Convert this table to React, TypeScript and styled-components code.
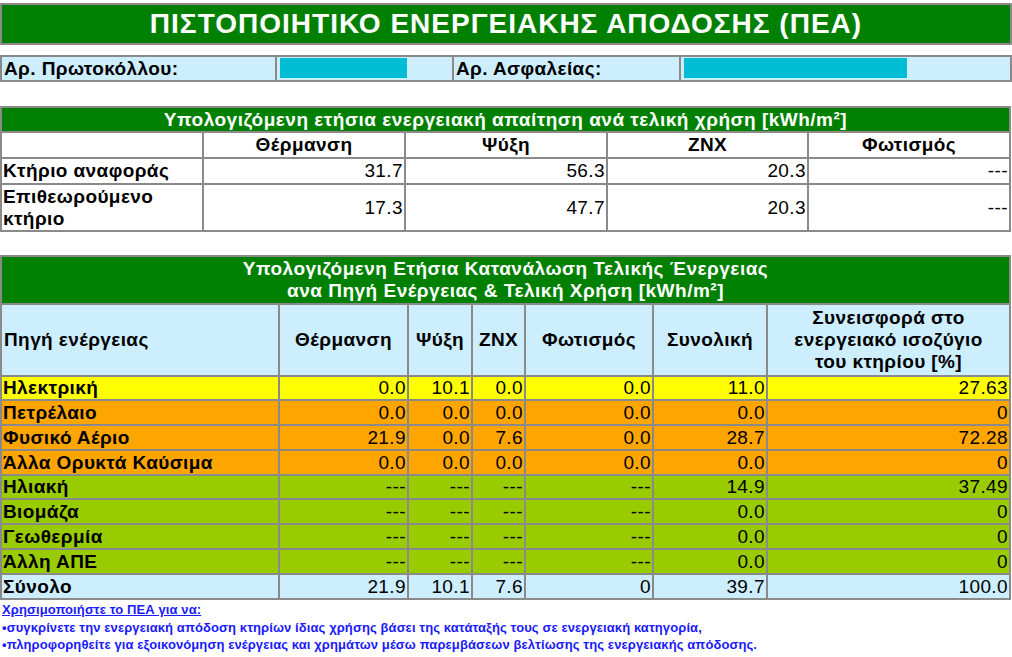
import React from "react";
import styled, { createGlobalStyle } from "styled-components";

const Global = createGlobalStyle`
  html, body { margin: 0; padding: 0; background: #fff; }
  body { font-family: "Liberation Sans", Arial, sans-serif; color: #000; }
`;

const GRID = "#8a8a8a";
const GREEN = "#008000";
const BLUE = "#cceeff";

const Page = styled.div`
  width: 1012px;
  padding-top: 3px;
  display: flex;
  flex-direction: column;
`;

const Title = styled.div`
  height: 38px;
  border: 2px solid ${GRID};
  background: ${GREEN};
  color: #fff;
  font-weight: bold;
  font-size: 28px;
  letter-spacing: 1px;
  display: flex;
  align-items: center;
  justify-content: center;
`;

const InfoRow = styled.div`
  margin-top: 10px;
  display: grid;
  grid-template-columns: 273px 177px 227px 1fr;
  border: 2px solid ${GRID};
  background: ${BLUE};
  height: 23px;
`;

const InfoCell = styled.div<{ $sep?: boolean }>`
  position: relative;
  font-size: 19px;
  letter-spacing: 0.4px;
  font-weight: bold;
  line-height: 23px;
  padding-left: 2px;
  border-left: ${(p) => (p.$sep ? `2px solid ${GRID}` : "none")};
  overflow: hidden;
  white-space: nowrap;
`;

const Redact = styled.span<{ $w: number }>`
  position: absolute;
  left: 3px;
  top: 1px;
  height: 20px;
  width: ${(p) => p.$w}px;
  background: #00bcd4;
`;

const Table = styled.table<{ $top: number }>`
  margin-top: ${(p) => p.$top}px;
  width: 1011px;
  border-collapse: collapse;
  table-layout: fixed;
  border: 2px solid ${GRID};
  font-size: 19px;
  letter-spacing: 0.4px;
`;

const HeadCell = styled.td<{ $h: number }>`
  background: ${GREEN};
  color: #fff;
  font-weight: bold;
  text-align: center;
  height: ${(p) => p.$h}px;
  padding: 0;
  line-height: 22px;
  border: 2px solid ${GRID};
  letter-spacing: 0.5px;
`;

const Th = styled.td<{ $bg: string; $h: number; $left?: boolean }>`
  background: ${(p) => p.$bg};
  font-weight: bold;
  text-align: ${(p) => (p.$left ? "left" : "center")};
  height: ${(p) => p.$h}px;
  padding: 0 2px;
  line-height: 22px;
  border: 2px solid ${GRID};
  vertical-align: middle;
  white-space: nowrap;
`;

const Td = styled.td<{ $bg: string; $h: number; $label?: boolean }>`
  background: ${(p) => p.$bg};
  font-weight: ${(p) => (p.$label ? "bold" : "normal")};
  text-align: ${(p) => (p.$label ? "left" : "right")};
  height: ${(p) => p.$h}px;
  padding: 0 1px 0 1px;
  line-height: 22px;
  border: 2px solid ${GRID};
  white-space: ${(p) => (p.$label ? "normal" : "nowrap")};
  vertical-align: middle;
  overflow: hidden;
`;

const Footer = styled.div`
  margin-top: 0px;
  padding-left: 2px;
  color: #1a1aff;
  font-weight: bold;
  display: flex;
  flex-direction: column;
`;

const FooterTitle = styled.span`
  font-size: 13px;
  letter-spacing: 0.1px;
  line-height: 19px;
  padding-bottom: 0;
  text-decoration: underline;
  align-self: flex-start;
`;

const FooterLine = styled.span`
  font-size: 13px;
  letter-spacing: 0.1px;
  line-height: 17px;
  white-space: nowrap;
`;

const demand = [
  { label: "Κτήριο αναφοράς", vals: ["31.7", "56.3", "20.3", "---"], h: 24 },
  { label: "Επιθεωρούμενο κτήριο", vals: ["17.3", "47.7", "20.3", "---"], h: 45 },
];

const YELLOW = "#ffff00";
const ORANGE = "#ffa500";
const LIME = "#99cc00";

const sources: { label: string; bg: string; h: number; vals: string[] }[] = [
  { label: "Ηλεκτρική", bg: YELLOW, h: 22, vals: ["0.0", "10.1", "0.0", "0.0", "11.0", "27.63"] },
  { label: "Πετρέλαιο", bg: ORANGE, h: 23, vals: ["0.0", "0.0", "0.0", "0.0", "0.0", "0"] },
  { label: "Φυσικό Αέριο", bg: ORANGE, h: 23, vals: ["21.9", "0.0", "7.6", "0.0", "28.7", "72.28"] },
  { label: "Άλλα Ορυκτά Καύσιμα", bg: ORANGE, h: 23, vals: ["0.0", "0.0", "0.0", "0.0", "0.0", "0"] },
  { label: "Ηλιακή", bg: LIME, h: 22, vals: ["---", "---", "---", "---", "14.9", "37.49"] },
  { label: "Βιομάζα", bg: LIME, h: 23, vals: ["---", "---", "---", "---", "0.0", "0"] },
  { label: "Γεωθερμία", bg: LIME, h: 23, vals: ["---", "---", "---", "---", "0.0", "0"] },
  { label: "Άλλη ΑΠΕ", bg: LIME, h: 23, vals: ["---", "---", "---", "---", "0.0", "0"] },
  { label: "Σύνολο", bg: BLUE, h: 23, vals: ["21.9", "10.1", "7.6", "0", "39.7", "100.0"] },
];

export default function App() {
  return (
    <Page>
      <Global />
      <Title>ΠΙΣΤΟΠΟΙΗΤΙΚΟ ΕΝΕΡΓΕΙΑΚΗΣ ΑΠΟΔΟΣΗΣ (ΠΕΑ)</Title>
      <InfoRow>
        <InfoCell>Αρ. Πρωτοκόλλου:</InfoCell>
        <InfoCell $sep>
          1<Redact $w={127} />
        </InfoCell>
        <InfoCell $sep>Αρ. Ασφαλείας:</InfoCell>
        <InfoCell $sep>
          1<Redact $w={223} />
        </InfoCell>
      </InfoRow>

      <Table $top={24}>
        <colgroup>
          <col style={{ width: 202 }} />
          <col style={{ width: 202 }} />
          <col style={{ width: 202 }} />
          <col style={{ width: 201 }} />
          <col />
        </colgroup>
        <tbody>
          <tr>
            <HeadCell colSpan={5} $h={23}>
              Υπολογιζόμενη ετήσια ενεργειακή απαίτηση ανά τελική χρήση [kWh/m²]
            </HeadCell>
          </tr>
          <tr>
            <Th $bg="#fff" $h={24}></Th>
            <Th $bg="#fff" $h={24}>Θέρμανση</Th>
            <Th $bg="#fff" $h={24}>Ψύξη</Th>
            <Th $bg="#fff" $h={24}>ZNX</Th>
            <Th $bg="#fff" $h={24}>Φωτισμός</Th>
          </tr>
          {demand.map((r) => (
            <tr key={r.label}>
              <Td $bg="#fff" $h={r.h} $label>
                {r.label}
              </Td>
              {r.vals.map((v, i) => (
                <Td key={i} $bg="#fff" $h={r.h}>
                  {v}
                </Td>
              ))}
            </tr>
          ))}
        </tbody>
      </Table>

      <Table $top={23}>
        <colgroup>
          <col style={{ width: 278 }} />
          <col style={{ width: 129 }} />
          <col style={{ width: 64 }} />
          <col style={{ width: 53 }} />
          <col style={{ width: 128 }} />
          <col style={{ width: 114 }} />
          <col />
        </colgroup>
        <tbody>
          <tr>
            <HeadCell colSpan={7} $h={46}>
              Υπολογιζόμενη Ετήσια Κατανάλωση Τελικής Ένεργειας
              <br />
              ανα Πηγή Ενέργειας &amp; Τελική Χρήση [kWh/m²]
            </HeadCell>
          </tr>
          <tr>
            <Th $bg={BLUE} $h={70} $left>
              Πηγή ενέργειας
            </Th>
            <Th $bg={BLUE} $h={70}>Θέρμανση</Th>
            <Th $bg={BLUE} $h={70}>Ψύξη</Th>
            <Th $bg={BLUE} $h={70}>ZNX</Th>
            <Th $bg={BLUE} $h={70}>Φωτισμός</Th>
            <Th $bg={BLUE} $h={70}>Συνολική</Th>
            <Th $bg={BLUE} $h={70}>
              Συνεισφορά στο
              <br />
              ενεργειακό ισοζύγιο
              <br />
              του κτηρίου [%]
            </Th>
          </tr>
          {sources.map((r) => (
            <tr key={r.label}>
              <Td $bg={r.bg} $h={r.h} $label>
                {r.label}
              </Td>
              {r.vals.map((v, i) => (
                <Td key={i} $bg={r.bg} $h={r.h}>
                  {v}
                </Td>
              ))}
            </tr>
          ))}
        </tbody>
      </Table>

      <Footer>
        <FooterTitle>Χρησιμοποιήστε το ΠΕΑ για να:</FooterTitle>
        <FooterLine>
          •συγκρίνετε την ενεργειακή απόδοση κτηρίων ίδιας χρήσης βάσει της κατάταξής τους σε ενεργειακή κατηγορία,
        </FooterLine>
        <FooterLine>
          •πληροφορηθείτε για εξοικονόμηση ενέργειας και χρημάτων μέσω παρεμβάσεων βελτίωσης της ενεργειακής απόδοσης.
        </FooterLine>
      </Footer>
    </Page>
  );
}
